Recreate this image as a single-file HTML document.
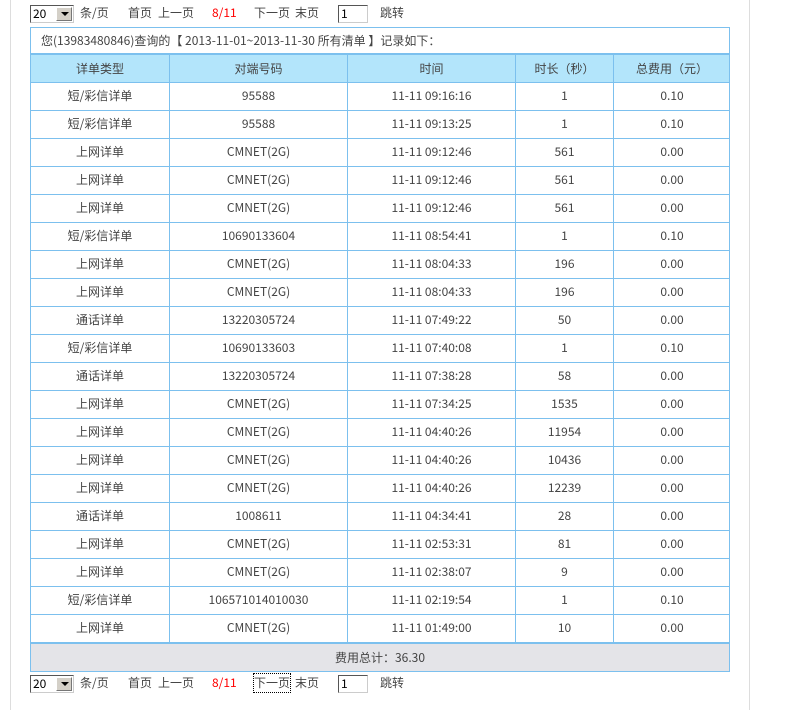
<!DOCTYPE html>
<html><head><meta charset="utf-8"><style>
*{margin:0;padding:0;box-sizing:border-box}
body{width:788px;height:710px;background:#fff;position:relative;overflow:hidden;font-family:"WenQuanYi Zen Hei","Noto Sans CJK SC",sans-serif;font-size:12px;color:#444}
.vl{position:absolute;top:0;bottom:0;width:1px;background:#ddd}
.p{position:absolute;white-space:nowrap;line-height:18px}
.sel{position:absolute;width:44px;height:18px;border:1px solid #555;border-right-color:#ccc;border-bottom-color:#ccc;background:#fff;font-size:12px;line-height:16px;padding-left:2px;color:#000}
.sel b{position:absolute;right:1px;top:1px;width:16px;height:14px;background:#d4d0c8;border:1px solid #fff;border-right-color:#777;border-bottom-color:#777}
.sel b:after{content:"";position:absolute;left:4px;top:4px;border:4px solid transparent;border-top:4px solid #000;border-bottom:0}
.inp{position:absolute;width:30px;height:18px;border:1px solid #555;border-right-color:#ccc;border-bottom-color:#ccc;color:#000;line-height:16px;padding-left:2px}
.row{position:absolute;left:30px;width:700px;height:29px;border:1px solid #7cc0ee;border-top:none}
.c{position:absolute;top:0;height:28px;line-height:28px;text-align:center;border-right:1px solid #7cc0ee}
</style></head><body>
<div class="vl" style="left:10px"></div>
<div class="vl" style="left:749px"></div>

<div class="sel" style="left:30px;top:5px">20<b></b></div>
<div class="p" style="left:80px;top:4px">条/页</div>
<div class="p" style="left:128px;top:4px">首页</div>
<div class="p" style="left:158px;top:4px">上一页</div>
<div class="p" style="left:212px;top:4px;color:#f00">8/11</div>
<div class="p" style="left:254px;top:4px">下一页</div>
<div class="p" style="left:295px;top:4px">末页</div>
<div class="inp" style="left:338px;top:5px">1</div>
<div class="p" style="left:380px;top:4px">跳转</div>

<div style="position:absolute;left:30px;top:27px;width:700px;height:28px;border:1px solid #7cc0ee;border-bottom:2px solid #7cc0ee;padding-left:10px;line-height:26px">您(13983480846)查询的【 2013-11-01~2013-11-30 所有清单 】记录如下：</div>

<div id="t"></div>
<script>
var cols=[[0,139],[139,178],[317,168],[485,98],[583,116]];
var rows=[["详单类型","对端号码","时间","时长（秒）","总费用（元）"],
["短/彩信详单","95588","11-11 09:16:16","1","0.10"],
["短/彩信详单","95588","11-11 09:13:25","1","0.10"],
["上网详单","CMNET(2G)","11-11 09:12:46","561","0.00"],
["上网详单","CMNET(2G)","11-11 09:12:46","561","0.00"],
["上网详单","CMNET(2G)","11-11 09:12:46","561","0.00"],
["短/彩信详单","10690133604","11-11 08:54:41","1","0.10"],
["上网详单","CMNET(2G)","11-11 08:04:33","196","0.00"],
["上网详单","CMNET(2G)","11-11 08:04:33","196","0.00"],
["通话详单","13220305724","11-11 07:49:22","50","0.00"],
["短/彩信详单","10690133603","11-11 07:40:08","1","0.10"],
["通话详单","13220305724","11-11 07:38:28","58","0.00"],
["上网详单","CMNET(2G)","11-11 07:34:25","1535","0.00"],
["上网详单","CMNET(2G)","11-11 04:40:26","11954","0.00"],
["上网详单","CMNET(2G)","11-11 04:40:26","10436","0.00"],
["上网详单","CMNET(2G)","11-11 04:40:26","12239","0.00"],
["通话详单","1008611","11-11 04:34:41","28","0.00"],
["上网详单","CMNET(2G)","11-11 02:53:31","81","0.00"],
["上网详单","CMNET(2G)","11-11 02:38:07","9","0.00"],
["短/彩信详单","106571014010030","11-11 02:19:54","1","0.10"],
["上网详单","CMNET(2G)","11-11 01:49:00","10","0.00"]];
var h="";
for(var i=0;i<rows.length;i++){
 var ty=i==0?55:82+(i-1)*28;
 var ht=i==0?28:29;
 h+='<div class="row" style="top:'+ty+'px;height:'+ht+'px;'+(i==0?'background:#b3e5fb;':'')+'">';
 for(var j=0;j<5;j++){
  h+='<div class="c" style="left:'+cols[j][0]+'px;width:'+cols[j][1]+'px;'+(i==0?'height:27px;line-height:27px;':'')+(j==4?'border-right:none;':'')+'">'+rows[i][j]+'</div>';
 }
 h+='</div>';
}
document.getElementById('t').innerHTML=h;
</script>

<div style="position:absolute;left:30px;top:642px;width:700px;height:30px;background:#e4e4e8;border:1px solid #7cc0ee;border-top:2px solid #7cc0ee;text-align:center;line-height:27px">费用总计：36.30</div>

<div class="sel" style="left:30px;top:675px">20<b></b></div>
<div class="p" style="left:80px;top:674px">条/页</div>
<div class="p" style="left:128px;top:674px">首页</div>
<div class="p" style="left:158px;top:674px">上一页</div>
<div class="p" style="left:212px;top:674px;color:#f00">8/11</div>
<div class="p" style="left:254px;top:674px;outline:1px dotted #000">下一页</div>
<div class="p" style="left:295px;top:674px">末页</div>
<div class="inp" style="left:338px;top:675px">1</div>
<div class="p" style="left:380px;top:674px">跳转</div>
</body></html>
